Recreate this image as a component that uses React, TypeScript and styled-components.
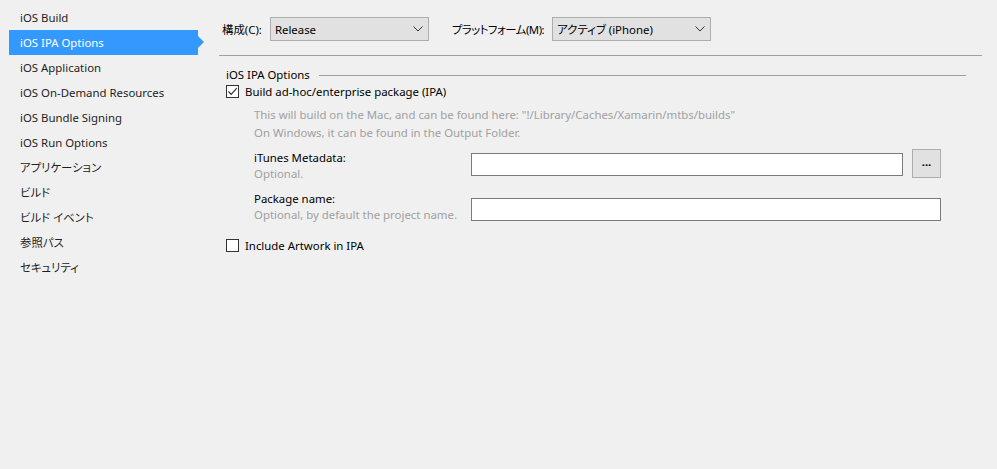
import React from 'react';
import styled, {createGlobalStyle} from "styled-components";

const GlobalStyle = createGlobalStyle`
html, body {
margin: 0;
padding: 0;
background: #f0f0f0;
}
body {
font-family: "Segoe UI", "Noto Sans", "Noto Sans CJK JP", sans-serif;
font-size: 11.4px;
font-feature-settings: "palt";
color: #000;
}
`;

const PAGES = [
    'iOS Build',
    'iOS IPA Options',
    'iOS Application',
    'iOS On-Demand Resources',
    'iOS Bundle Signing',
    'iOS Run Options',
    'アプリケーション',
    'ビルド',
    'ビルド イベント',
    '参照パス',
    'セキュリティ',
];

export default function App() {
    return (
        <>
            <GlobalStyle/>
            <Page>
                <Sidebar>
                    {PAGES.map(p => (
                        <NavItem key={p} selected={p === 'iOS IPA Options'}>{p}</NavItem>
                    ))}
                </Sidebar>
                <Content>
                    <TopBar>
                        <Label>構成(C):</Label>
                        <Select>
                            <span>Release</span>
                            <Chevron/>
                        </Select>
                        <Label spaced tight>プラットフォーム(M):</Label>
                        <Select>
                            <span>アクティブ (iPhone)</span>
                            <Chevron/>
                        </Select>
                    </TopBar>
                    <Rule/>
                    <Group>
                        <GroupHeader>
                            <span>iOS IPA Options</span>
                            <HeaderLine/>
                        </GroupHeader>
                        <CheckRow>
                            <CheckBox checked/>
                            <span>Build ad-hoc/enterprise package (IPA)</span>
                        </CheckRow>
                        <Indented>
                            <Note>This will build on the Mac, and can be found here: "!/Library/Caches/Xamarin/mtbs/builds"</Note>
                            <Note>On Windows, it can be found in the Output Folder.</Note>
                            <Field gap={7} labelTop={1} inputTop={4}>
                                <FieldLabel>
                                    <span>iTunes Metadata:</span>
                                    <Hint>Optional.</Hint>
                                </FieldLabel>
                                <TextBox width={432}/>
                                <BrowseButton>...</BrowseButton>
                            </Field>
                            <Field gap={9} labelTop={0} inputTop={7}>
                                <FieldLabel>
                                    <span>Package name:</span>
                                    <Hint>Optional, by default the project name.</Hint>
                                </FieldLabel>
                                <TextBox width={470}/>
                            </Field>
                        </Indented>
                        <CheckRow style={{marginTop: 16}}>
                            <CheckBox/>
                            <span>Include Artwork in IPA</span>
                        </CheckRow>
                    </Group>
                </Content>
            </Page>
        </>
    );
}

const Chevron = () => (
    <svg width="10" height="6" viewBox="0 0 10 6">
        <path d="M0.5 0.5 L5 5 L9.5 0.5" fill="none" stroke="#333" strokeWidth="1"/>
    </svg>
);

const CheckBox = ({checked}: {checked?: boolean}) => (
    <Box>
        {checked && (
            <svg width="11" height="11" viewBox="0 0 11 11">
                <path d="M1.5 5.5 L4.2 8.3 L9.8 2.2" fill="none" stroke="#333" strokeWidth="1.2"/>
            </svg>
        )}
    </Box>
);

const Page = styled.div`
display: flex;
width: 997px;
height: 469px;
overflow: hidden;
`;

const Sidebar = styled.nav`
width: 219px;
flex-shrink: 0;
padding-top: 5px;
box-sizing: border-box;
`;

const NavItem = styled.div<{selected?: boolean}>`
position: relative;
margin-left: 9px;
width: 189px;
height: 25px;
line-height: 25px;
padding-left: 11px;
box-sizing: border-box;
white-space: nowrap;
color: ${p => p.selected ? '#fff' : '#1e1e1e'};
background: ${p => p.selected ? '#3399ff' : 'transparent'};

&::after {
content: '';
display: ${p => p.selected ? 'block' : 'none'};
position: absolute;
right: -6px;
top: 6px;
border-style: solid;
border-width: 6px 0 6px 6px;
border-color: transparent transparent transparent #3399ff;
}
`;

const Content = styled.main`
flex: 1;
padding: 17px 15px 0 0;
box-sizing: border-box;
`;

const TopBar = styled.div`
display: flex;
align-items: center;
height: 24px;
padding-left: 3px;
`;

const Label = styled.span<{spaced?: boolean; tight?: boolean}>`
margin-left: ${p => p.spaced ? 23 : 0}px;
margin-right: 8px;
letter-spacing: ${p => p.tight ? '-0.5px' : 'normal'};
white-space: nowrap;
`;

const Select = styled.div`
display: flex;
align-items: center;
justify-content: space-between;
width: 159px;
height: 24px;
box-sizing: border-box;
padding: 0 5px 0 4px;
background: #e1e1e1;
border: 1px solid #adadad;
`;

const Rule = styled.div`
margin-top: 14px;
height: 1px;
background: #a0a0a0;
`;

const Group = styled.section`
padding: 11px 16px 0 7px;
`;

const GroupHeader = styled.div`
display: flex;
align-items: center;
height: 14px;
white-space: nowrap;
`;

const HeaderLine = styled.div`
flex: 1;
height: 1px;
margin-left: 9px;
margin-top: 3px;
background: #a0a0a0;
`;

const CheckRow = styled.label`
display: flex;
align-items: center;
gap: 6px;
margin-top: 4px;
height: 13px;
`;

const Box = styled.span`
display: flex;
align-items: center;
justify-content: center;
width: 13px;
height: 13px;
box-sizing: border-box;
border: 1px solid #333;
background: #fff;
`;

const Indented = styled.div`
padding-left: 28px;
padding-top: 8px;
`;

const Note = styled.div`
color: #a0a0a0;
height: 18px;
line-height: 18px;
white-space: nowrap;
`;

type FieldProps = {
    gap: number;
    labelTop: number;
    inputTop: number;
};

const Field = styled.div<FieldProps>`
display: flex;
align-items: flex-start;
margin-top: ${p => p.gap}px;

& > div:first-child {
margin-top: ${p => p.labelTop}px;
}
& > div:nth-child(2) {
margin-top: ${p => p.inputTop}px;
}
`;

const FieldLabel = styled.div`
display: flex;
flex-direction: column;
width: 217px;
line-height: 16px;
white-space: nowrap;
`;

const Hint = styled.span`
color: #a0a0a0;
`;

const TextBox = styled.div<{width: number}>`
width: ${p => p.width}px;
height: 23px;
box-sizing: border-box;
background: #fff;
border: 1px solid #7a7a7a;
`;

const BrowseButton = styled.div`
display: flex;
align-items: center;
justify-content: center;
margin-left: 9px;
width: 29px;
height: 29px;
box-sizing: border-box;
background: #e1e1e1;
border: 1px solid #adadad;
font-weight: bold;
padding-bottom: 4px;
`;
